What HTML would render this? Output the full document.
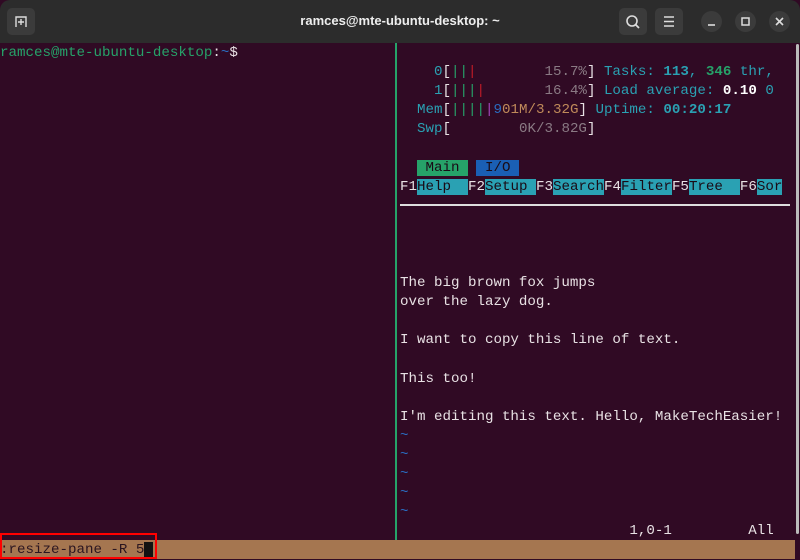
<!DOCTYPE html>
<html><head><meta charset="utf-8"><style>
body{margin:0;width:800px;height:559px;overflow:hidden;background:#300a24;font-family:"Liberation Mono",monospace;}
#tb{position:absolute;left:0;top:0;width:800px;height:43px;background:#2c2c2c;border-radius:10px 10px 0 0;}
.btn{position:absolute;top:8px;width:28px;height:27px;background:#3b3b3b;border-radius:5px;}
.cir{position:absolute;top:11px;width:21px;height:21px;border-radius:50%;background:#3b3b3b;}
#title{position:absolute;top:13px;left:0;width:800px;text-align:center;color:#eee;font:bold 13px "Liberation Sans",sans-serif;}
.row{position:absolute;left:0;height:19.2px;line-height:19.2px;font-size:14.17px;white-space:pre;color:#e8e1e4;}
.g{color:#26a269}.b{color:#2a6cc0}.c{color:#2aa1b3}.r{color:#c01c28}.gr{color:#8a7a84}.m{color:#a347ba}.o{color:#c08a5a}.w{color:#fff;font-weight:bold}
.cb{color:#2aa1b3;font-weight:bold}.gb{color:#26a269;font-weight:bold}
.tab{background:#2aa1b3;color:#1a0b16}
</style></head><body>
<div id="tb">
 <div class="btn" style="left:7px"><svg width="28" height="27"><path d="M9 19V9h10v10" fill="none" stroke="#ddd" stroke-width="1.4"/><path d="M14 11v6M11 14h6" stroke="#ddd" stroke-width="1.4"/></svg></div>
 <div id="title">ramces@mte-ubuntu-desktop: ~</div>
 <div class="btn" style="left:619px"><svg width="28" height="27"><circle cx="13" cy="13" r="5" fill="none" stroke="#ddd" stroke-width="1.6"/><path d="M16.5 16.5L20 20" stroke="#ddd" stroke-width="1.8"/></svg></div>
 <div class="btn" style="left:655px"><svg width="28" height="27"><path d="M9 9h10M9 13.5h10M9 18h10" stroke="#ddd" stroke-width="1.5"/></svg></div>
 <div class="cir" style="left:701px"><svg width="21" height="21"><path d="M7 14h7" stroke="#ddd" stroke-width="1.6"/></svg></div>
 <div class="cir" style="left:735px"><svg width="21" height="21"><rect x="7" y="7" width="7" height="7" fill="none" stroke="#ddd" stroke-width="1.5"/></svg></div>
 <div class="cir" style="left:769px"><svg width="21" height="21"><path d="M7 7l7 7M14 7l-7 7" stroke="#ddd" stroke-width="1.6"/></svg></div>
</div>
<div style="position:absolute;left:395px;top:43px;width:2px;height:497px;background:#26a269"></div>
<div style="position:absolute;left:796px;top:44px;width:3px;height:490px;background:#bbb;border-radius:2px"></div>
<div class="row" style="top:44px"><span class="g">ramces@mte-ubuntu-desktop</span>:<span class="b">~</span>$</div>
<div style="position:absolute;left:400px;top:1px">
<div class="row" style="top:62px">    <span class="c">0</span>[<span class="g">||</span><span class="r">|</span>        <span class="gr">15.7%</span>] <span class="c">Tasks: </span><span class="cb">113</span><span class="c">, </span><span class="gb">346</span><span class="c"> thr,</span></div>
<div class="row" style="top:81px">    <span class="c">1</span>[<span class="g">|||</span><span class="r">|</span>       <span class="gr">16.4%</span>] <span class="c">Load average: </span><span class="w">0.10</span> <span class="c">0</span></div>
<div class="row" style="top:100px">  <span class="c">Mem</span>[<span class="g">||||</span><span class="m">|</span><span class="b">9</span><span class="o">01M/3.32G</span>] <span class="c">Uptime: </span><span class="cb">00:20:17</span></div>
<div class="row" style="top:119px">  <span class="c">Swp</span>[        <span class="gr">0K/3.82G</span>]</div>
<div class="row" style="top:158px">  <span style="background:#26a269;color:#1a0b16"> Main </span> <span style="background:#1a5fb4;color:#1a0b16"> I/O </span></div>
<div class="row" style="top:177px">F1<span class="tab">Help  </span>F2<span class="tab">Setup </span>F3<span class="tab">Search</span>F4<span class="tab">Filter</span>F5<span class="tab">Tree  </span>F6<span class="tab">Sor</span></div>
<div style="position:absolute;left:0;top:203px;width:390px;height:2px;background:#ddd"></div>
<div class="row" style="top:273px">The big brown fox jumps</div>
<div class="row" style="top:292px">over the lazy dog.</div>
<div class="row" style="top:330px">I want to copy this line of text.</div>
<div class="row" style="top:369px">This too!</div>
<div class="row" style="top:407px">I'm editing this text. Hello, MakeTechEasier!</div>
<div class="row b" style="top:426px">~</div>
<div class="row b" style="top:445px">~</div>
<div class="row b" style="top:464px">~</div>
<div class="row b" style="top:483px">~</div>
<div class="row b" style="top:502px">~</div>
<div class="row" style="top:521px">                           1,0-1         All</div>
</div>
<div style="position:absolute;left:0;top:540px;width:795px;height:19px;background:#a57650"></div>
<div class="row" style="top:541px;color:#2a1520">:resize-pane -R 5<span style="background:#111">&nbsp;</span></div>
<div style="position:absolute;left:0;top:533px;width:153px;height:22px;border:2px solid #f00"></div>
</body></html>
